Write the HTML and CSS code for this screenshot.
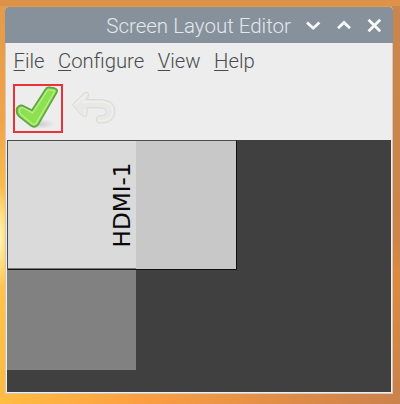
FILE: index.html
```
<!DOCTYPE html>
<html lang="en">
<head>
<meta charset="utf-8">
<title>Screen Layout Editor</title>
<link rel="stylesheet" href="styles.css">
</head>
<body>
<main class="window">
  <header class="titlebar">
    <h1 class="title">Screen Layout Editor</h1>
    <svg class="controls" width="80" height="16" viewBox="0 0 80 16">
      <path d="M4 5.5L10.2 11.2L16.4 5.5M35 11.2L41 5.5L47 11.2M65.5 2.8L77.2 14.2M77.2 2.8L65.5 14.2"/>
    </svg>
  </header>
  <nav class="menu">
    <span class="file"><u>F</u>ile</span>
    <span class="configure"><u>C</u>onfigure</span>
    <span class="view"><u>V</u>iew</span>
    <span class="help"><u>H</u>elp</span>
  </nav>
  <div class="toolbar">
    <div class="apply">
      <svg width="46" height="45" viewBox="0 0 46 45">
        <defs>
          <linearGradient id="green" x1="0" y1="0" x2="1" y2="1"><stop offset="0" stop-color="#8bd957"/><stop offset="1" stop-color="#92e54d"/></linearGradient>
          <radialGradient id="shade"><stop offset="0" stop-color="#aaa" stop-opacity=".5"/><stop offset="1" stop-color="#aaa" stop-opacity="0"/></radialGradient>
        </defs>
        <ellipse cx="25" cy="38" rx="15" ry="5" fill="url(#shade)"/>
        <path class="check" d="M1.8 22.7Q3.5 18.9 7 19.4L17 24.2L30.6 3.2Q31.8 1.2 34 1.4L39.5 2.2Q43.3 3.3 41.6 6.5L23 38.8Q20 42.4 16.2 39.8L3.5 29.8Q.9 26.5 1.8 22.7Z"/>
        <path class="shine" d="M4.5 23.5Q6 20.8 8.5 22L17.6 27L32 5.2Q33 3.5 34.8 3.8L38.3 4.5Q39.8 5 39 6.7L21.3 36.8Q19.4 39.2 17.2 37.7L6 28.5Q4 26 4.5 23.5Z"/>
      </svg>
    </div>
    <svg class="undo" width="46" height="36" viewBox="0 0 46 36">
      <path class="undo-shape" d="M1.3 14.7L13 3.2Q16 .6 17.5 3.5Q18.2 6 15.5 9.7H31Q43.5 10.5 44 21Q43.5 32 33 33H28Q24.8 32.7 25.2 29Q25.5 25.8 28.8 25.6H31.5Q35 25.2 35.2 21.8Q34.8 18.2 30.8 17.9H16V24Q14.8 28.5 11 25.5Z"/>
      <path class="undo-shine" d="M4 14.7L15 4.4L11.5 12H31Q41.5 13 41.6 21Q41 30 31 30.5H27.5M14 19V25"/>
    </svg>
  </div>
  <section class="canvas">
    <div class="output"></div>
    <div class="ghost"></div>
    <svg class="label" width="40" height="120" viewBox="0 0 40 120"><text transform="translate(27.5 107.5) rotate(-90)" textLength="85" lengthAdjust="spacingAndGlyphs">HDMI-1</text></svg>
  </section>
</main>
</body>
</html>
```
FILE: styles.css
```
* { box-sizing: border-box; }
body {
  margin: 0;
  width: 400px;
  height: 404px;
  padding: 7px 7px 10px 5px;
  overflow: hidden;
  background:
    radial-gradient(ellipse 10px 52px at 0 238px, #fff6b8, rgba(255, 240, 140, 0)),
    linear-gradient(#dc9249, #dc9249 6px, transparent 6px) top / 100% 7px no-repeat,
    linear-gradient(90deg, #ffbd42, #fb9f42 35%, #dc8b48 75%, #cb824c) bottom / 100% 10px no-repeat,
    linear-gradient(#c9864c, #cd8549 60%, #dc8a40 68%, #c9824c) right / 8px 100% no-repeat,
    linear-gradient(#e49a49, #f2a348 30%, #ffc94c 55%, #ffb93f);
  font-family: Roboto, sans-serif;
  font-weight: 300;
}
.window {
  width: 388px;
  height: 387px;
  display: flex;
  flex-direction: column;
  overflow: hidden;
  border-radius: 4px 4px 1px 1px;
  background: #ededed;
  box-shadow: inset 0 0 0 1px #d4c8c0;
}
.titlebar {
  height: 36px;
  flex: none;
  display: flex;
  align-items: center;
  justify-content: flex-end;
  padding-right: 10px;
  background: #87919b;
}
.title {
  margin: 2px 12px 0 0;
  font-size: 20.5px;
  font-weight: 300;
  line-height: 24px;
  white-space: nowrap;
  color: #e2e8ee;
}
.controls {
  flex: none;
  fill: none;
  stroke: #f7f9fb;
  stroke-width: 2.8;
}
.menu {
  height: 37px;
  flex: none;
  display: flex;
  gap: 13.5px;
  padding: 6px 0 0 8.5px;
  font-size: 20.3px;
  line-height: 24px;
  color: #484c4d;
}
.menu u {
  text-decoration-thickness: 1px;
  text-underline-offset: 2px;
  text-decoration-skip-ink: none;
}
.toolbar {
  height: 60px;
  flex: none;
  display: flex;
  align-items: flex-start;
  gap: 9px;
  padding: 4px 0 0 8px;
}
.apply {
  width: 50px;
  height: 49px;
  border: 2px solid #e83439;
}
.apply svg { display: block; }
.check {
  fill: url(#green);
  stroke: #62a443;
  stroke-width: 1.7;
}
.shine {
  fill: none;
  stroke: #b6f28a;
  stroke-width: 1.2;
}
.undo { margin: 6px 0 0 -1px; }
.undo-shape {
  fill: #e8e8e4;
  stroke: #d9dad5;
  stroke-width: 1;
}
.undo-shine {
  fill: none;
  stroke: #efefeb;
  stroke-width: 1.4;
}
.canvas {
  position: relative;
  height: 252px;
  flex: none;
  margin: 0 2px;
  overflow: hidden;
  background: #404040;
}
.output {
  position: absolute;
  left: 0;
  top: 0;
  width: 230px;
  height: 130px;
  border: 1px solid #4b4b4b;
  border-right-color: #111;
  border-bottom-color: #111;
  background: #c8c8c8;
}
.ghost {
  position: absolute;
  left: 0;
  top: 0;
  width: 129px;
  height: 230px;
  background:
    linear-gradient(#4b4b4b, #4b4b4b) 0 0 / 1px 130px no-repeat,
    linear-gradient(#4b4b4b, #4b4b4b) 0 0 / 100% 1px no-repeat,
    linear-gradient(#dadada 128px, #777 128px, #777 128.5px, #171717 128.5px, #171717 130px, #818181 130px);
}
.label {
  position: absolute;
  left: 95px;
  top: 0;
}
.label text {
  font: 400 23.5px "DejaVu Sans", sans-serif;
  fill: #080808;
}
```
